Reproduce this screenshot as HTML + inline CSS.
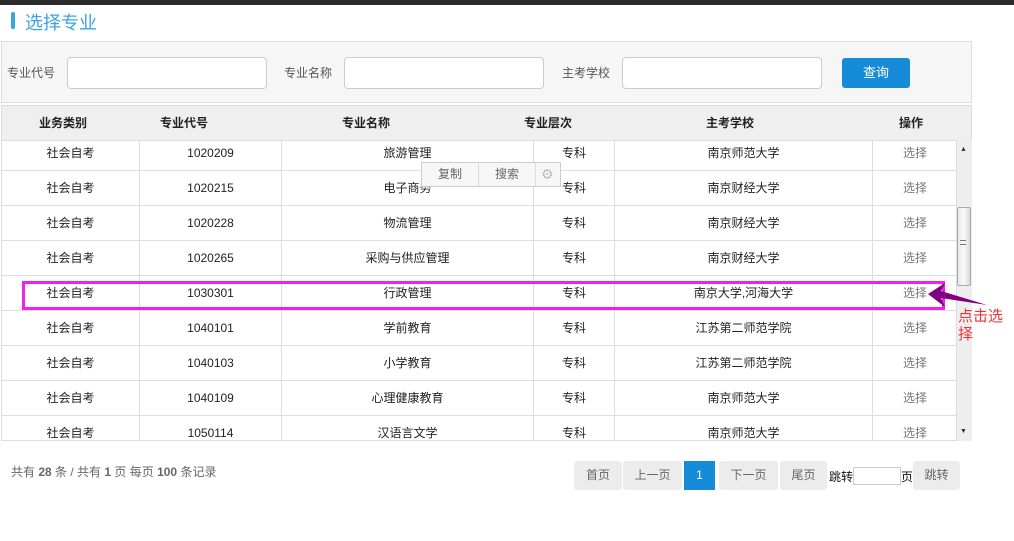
<!DOCTYPE html>
<html><head><meta charset="utf-8"><style>
*{margin:0;padding:0;box-sizing:border-box}
body{width:1014px;height:541px;background:#fff;position:relative;overflow:hidden;font-family:"Liberation Sans","Noto Sans CJK SC",sans-serif;font-size:12px;color:#222}
.abs{position:absolute}
.top{left:0;top:0;width:1014px;height:5px;background:#2b2b2b}
.title{left:25px;top:9px;font-size:18px;color:#3aa3e3}
.bar{left:11px;top:12px;width:4px;height:17px;background:#3aa3e3;border-radius:2px}
.panel{left:1px;top:41px;width:971px;height:62px;background:#f6f6f6;border:1px solid #ddd}
.lbl{color:#555;font-size:12px;top:64px}
.inp{top:57px;height:32px;background:#fff;border:1px solid #ccc;border-radius:4px}
.btn{left:842px;top:58px;width:68px;height:30px;background:#168bd8;color:#fff;border-radius:3px;text-align:center;line-height:30px;font-size:13px}
.head{left:1px;top:105px;width:971px;height:36px;background:#efefef;border:1px solid #ddd}
.head div{position:absolute;top:0;width:100px;line-height:35px;font-weight:bold;font-size:12px;text-align:center;color:#222}
.body{left:1px;top:140px;width:955px;height:301px;overflow:hidden;border-left:1px solid #ddd;border-bottom:1px solid #ddd}
.row{position:absolute;left:0;width:955px;height:35px;border-bottom:1px solid #ddd}
.row div{position:absolute;top:0;height:34px;line-height:35px;text-align:center;border-right:1px solid #ddd}
.sb{left:956px;top:140px;width:16px;height:301px;background:#eee;border-left:1px solid #ddd}
.thumb{left:957px;top:207px;width:14px;height:79px;background:linear-gradient(90deg,#e8e8e8,#fafafa,#d8d8d8);border:1px solid #aaa;border-radius:2px}
.pg{top:461px;height:29px;line-height:29px;background:#ececec;color:#666;text-align:center;border-radius:3px;font-size:12px}
</style></head><body>
<div class="abs top"></div>
<div class="abs bar"></div>
<div class="abs title">选择专业</div>
<div class="abs panel"></div>
<div class="abs lbl" style="left:7px">专业代号</div>
<div class="abs inp" style="left:67px;width:200px"></div>
<div class="abs lbl" style="left:284px">专业名称</div>
<div class="abs inp" style="left:344px;width:200px"></div>
<div class="abs lbl" style="left:562px">主考学校</div>
<div class="abs inp" style="left:622px;width:200px"></div>
<div class="abs btn">查询</div>
<div class="abs head">
<div style="left:11px">业务类别</div>
<div style="left:132px">专业代号</div>
<div style="left:314px">专业名称</div>
<div style="left:496px">专业层次</div>
<div style="left:678px">主考学校</div>
<div style="left:859px">操作</div>
</div>
<div class="abs body" id="b"></div>
<div class="abs sb"></div>
<div class="abs" style="left:960px;top:146px;font-size:7px;color:#333">▲</div>
<div class="abs" style="left:960px;top:428px;font-size:7px;color:#333">▼</div>
<div class="abs thumb"></div>
<div class="abs" style="left:960px;top:240px;width:6px;height:5px;border-top:1px solid #777;border-bottom:1px solid #777"></div>
<div class="abs" style="left:421px;top:162px;width:140px;height:25px;background:#f7f7f7;border:1px solid #ccc;color:#666;font-size:12px;line-height:23px">
<span class="abs" style="left:0;width:57px;text-align:center;border-right:1px solid #ddd;height:23px">复制</span>
<span class="abs" style="left:57px;width:57px;text-align:center;border-right:1px solid #ddd;height:23px">搜索</span>
<span class="abs" style="left:119px;color:#bbb;font-size:14px">⚙</span></div>
<div class="abs" style="left:22px;top:281px;width:923px;height:29px;border:3px solid #ee22ee"></div>
<svg class="abs" style="left:925px;top:283px" width="65" height="27"><polygon points="3,11 20,0 16,8 62,22 16,15 20,24" fill="#800080"/></svg>
<div class="abs" style="left:958px;top:308px;color:#ee3333;font-size:15px;line-height:18px;width:54px">点击选<br>择</div>
<div class="abs" style="left:11px;top:463px;color:#666;font-size:12px">共有 <b>28</b> 条 / 共有 <b>1</b> 页 每页 <b>100</b> 条记录</div>
<div class="abs pg" style="left:574px;width:48px">首页</div>
<div class="abs pg" style="left:623px;width:59px">上一页</div>
<div class="abs pg" style="left:684px;width:31px;background:#168bd8;color:#fff;border-radius:0">1</div>
<div class="abs pg" style="left:719px;width:59px">下一页</div>
<div class="abs pg" style="left:780px;width:47px">尾页</div>
<div class="abs" style="left:829px;top:468px;font-size:12px;color:#111">跳转</div>
<div class="abs" style="left:853px;top:467px;width:48px;height:18px;border:1px solid #ccc;background:#fff"></div>
<div class="abs" style="left:901px;top:468px;font-size:12px;color:#111">页</div>
<div class="abs pg" style="left:913px;width:47px">跳转</div>
<script>
var d=[["1020209","旅游管理","南京师范大学"],["1020215","电子商务","南京财经大学"],["1020228","物流管理","南京财经大学"],["1020265","采购与供应管理","南京财经大学"],["1030301","行政管理","南京大学,河海大学"],["1040101","学前教育","江苏第二师范学院"],["1040103","小学教育","江苏第二师范学院"],["1040109","心理健康教育","南京师范大学"],["1050114","汉语言文学","南京师范大学"]];
var h="";d.forEach(function(r,i){var t=-4+i*35;h+='<div class="row" style="top:'+t+'px"><div style="left:0;width:138px">社会自考</div><div style="left:138px;width:142px">'+r[0]+'</div><div style="left:280px;width:252px">'+r[1]+'</div><div style="left:532px;width:81px">专科</div><div style="left:613px;width:258px">'+r[2]+'</div><div style="left:871px;width:84px;color:#777;border-right:none">选择</div></div>';});
document.getElementById("b").innerHTML=h;
</script>
</body></html>
